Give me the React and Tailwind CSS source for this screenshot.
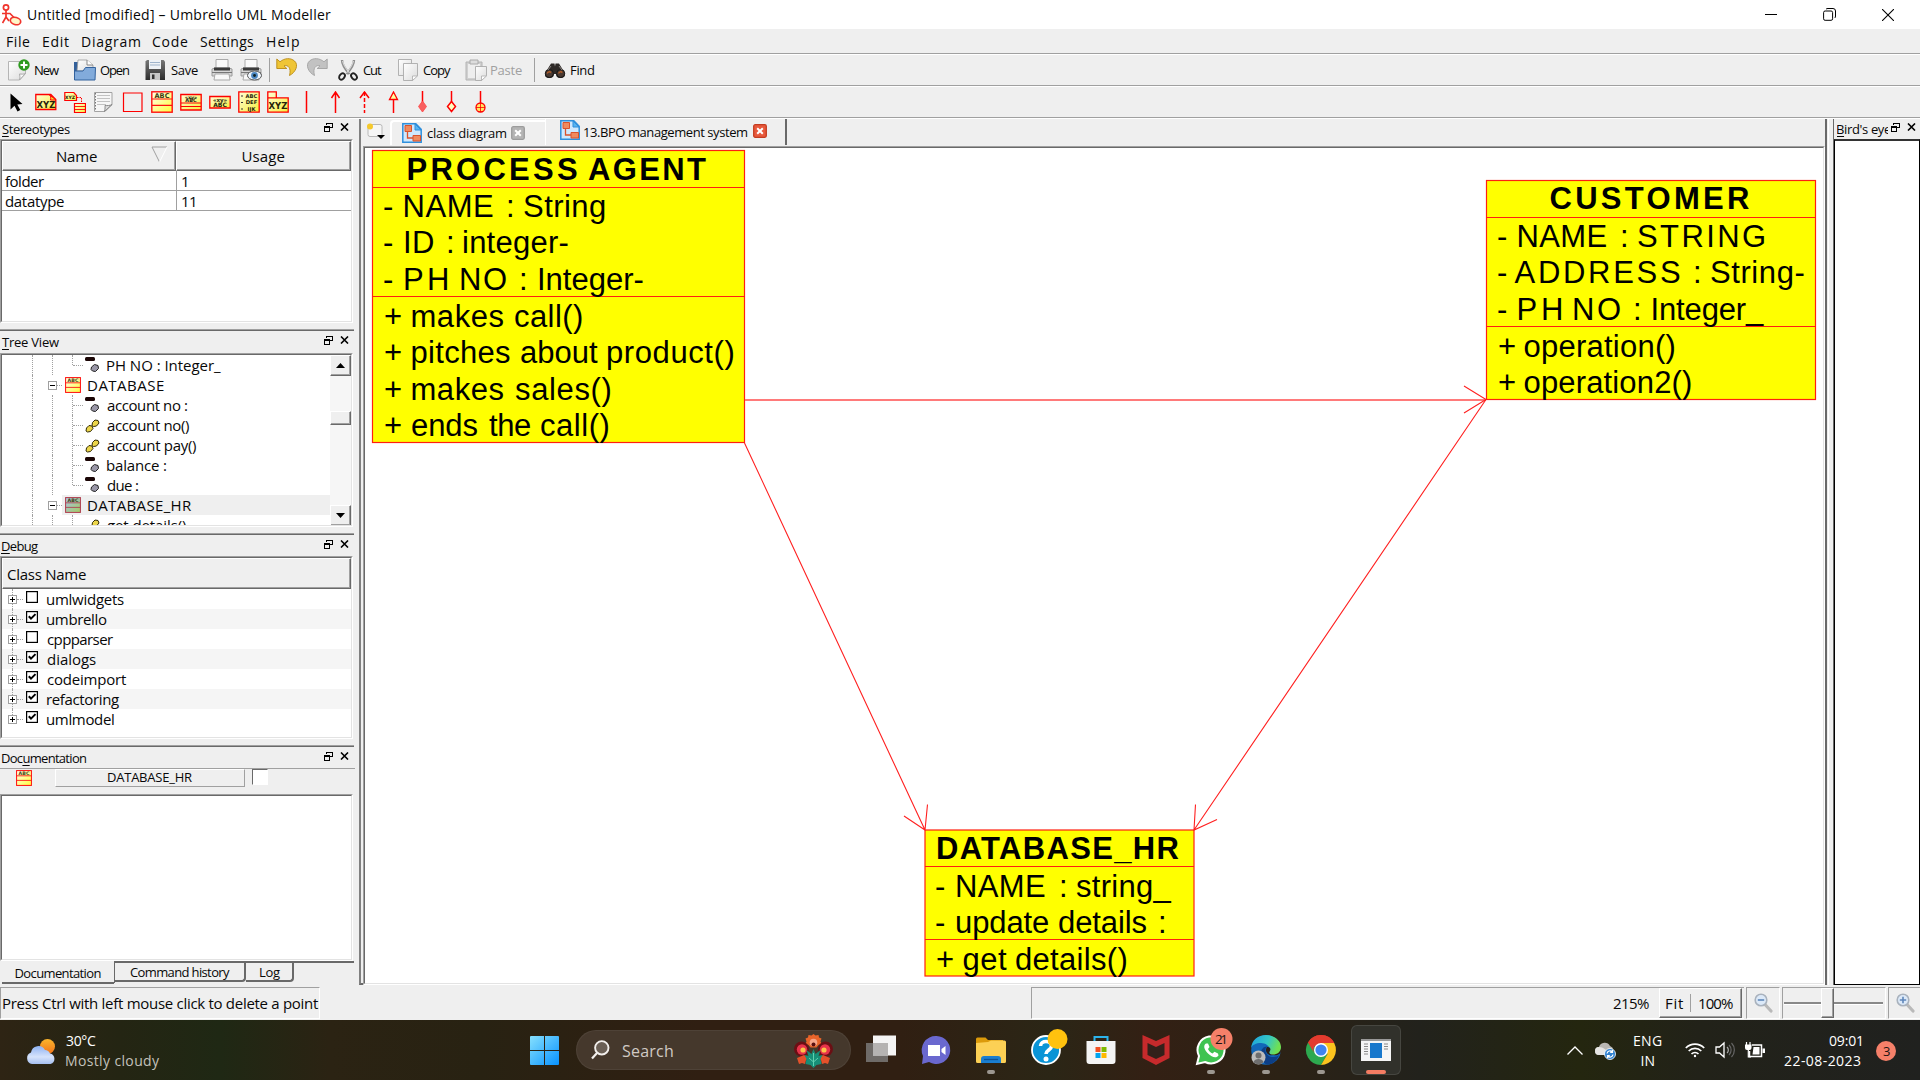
import React from "react";

const UI = '"Open Sans", "Noto Sans", sans-serif';
const ARIAL = '"Liberation Sans", Arial, sans-serif';
const SIZES = {
  10: "text-[10px]", 13: "text-[13px]", 14: "text-[14px]", 15: "text-[15px]",
  16: "text-[16px]", 17: "text-[17px]",
};

let ctx;
function measure(text, font, width) {
  ctx = ctx || document.createElement("canvas").getContext("2d");
  ctx.font = font;
  const m = ctx.measureText(text);
  const left = -m.actualBoundingBoxLeft;
  const ink = m.actualBoundingBoxRight - left;
  const spacing = width && text.length > 1 ? (width - ink) / (text.length - 1) : 0;
  return { left, spacing, ink };
}

/* A label whose drawn width is w pixels. u underlines the mnemonic at that index. */
function T({ t, w, s = 15, u = -1, className = "" }) {
  const m = measure(t, `400 ${s}px ${UI}`, w);
  return (
    <span className={`block shrink-0 whitespace-pre ${SIZES[s]} ${className}`} style={{ width: w || m.ink }}>
      <span style={{ letterSpacing: m.spacing, marginLeft: -m.left }}>
        {u < 0 ? t : <>{t.slice(0, u)}<u className="underline-offset-2">{t[u]}</u>{t.slice(u + 1)}</>}
      </span>
    </span>
  );
}

function Sunken({ className = "", children }) {
  return (
    <div className={`border border-t-[#a0a0a0] border-l-[#a0a0a0] border-r-white border-b-white ${className}`}>
      <div className="h-full overflow-hidden border border-t-[#696969] border-l-[#696969] border-r-[#e3e3e3] border-b-[#e3e3e3] bg-white">
        {children}
      </div>
    </div>
  );
}

function FloatIcon() {
  return (
    <svg className="shrink-0" width="9" height="10" viewBox="0 0 9 10" fill="none" stroke="#000" shapeRendering="crispEdges">
      <path d="M2.5 3V1.5h5.9v4H6M2 1h7" /><path d="M.5 9.5v-5h5v5zM0 5h6" />
    </svg>
  );
}
function CloseIcon() {
  return (
    <svg className="shrink-0" width="9" height="8" viewBox="0 0 9 8" stroke="#000" strokeWidth="1.6"><path d="M1 .5l7 7M8 .5l-7 7" /></svg>
  );
}

function DockTitle({ t, w, u, className = "" }) {
  return (
    <div className={`flex shrink-0 items-center pl-0.5 ${className}`}>
      <T t={t} w={w} s={13} u={u} />
      <div className="mr-1.5 mb-1 ml-auto flex items-center gap-[7px]"><FloatIcon /><CloseIcon /></div>
    </div>
  );
}
const DockEdge = () => <div className="h-0.5 w-[354px] shrink-0 border-t border-[#a0a0a0] bg-[#696969]" />;

function ClassIcon({ s = 16, dim = false }) {
  const line = dim ? "#b04050" : "#fe1010";
  return (
    <svg className="shrink-0" width={s} height={s} viewBox="0 0 22 22">
      <defs>
        <linearGradient id={dim ? "cd" : "cy"} x2="1" y2="1">
          <stop offset="0" stopColor={dim ? "#a9c4e8" : "#fffff0"} /><stop offset="1" stopColor={dim ? "#a2cc62" : "#ffff3c"} />
        </linearGradient>
      </defs>
      <rect x=".8" y=".8" width="20.400" height="20.400" fill={dim ? "url(#cd)" : "url(#cy)"} stroke={line} strokeWidth="1.400" />
      <path d="M1 8h20M1 14.300h20" stroke={line} strokeWidth="1.200" />
      <text x="11" y="7" textAnchor="middle" fontFamily="DejaVu Sans" fontWeight="700" fontSize="6.600" fill="#3c3a10">ABC</text>
    </svg>
  );
}

/* ---------- toolbar icons, 22px grid ---------- */
const I = ({ children, w = 22, h = 22, className = "" }) => (
  <svg className={`shrink-0 ${className}`} width={w} height={h} viewBox={`0 0 ${w} ${h}`} fill="none">{children}</svg>
);

const Grads = () => (
  <svg width="0" height="0" className="absolute">
    <defs>
      <linearGradient id="paper" x2="1" y2="1"><stop offset="0" stopColor="#fff" /><stop offset="1" stopColor="#dcdcdc" /></linearGradient>
      <linearGradient id="ye" x2="1" y2="1"><stop offset="0" stopColor="#ffffd8" /><stop offset="1" stopColor="#f6ee3c" /></linearGradient>
      <linearGradient id="gr" x2="0" y2="1"><stop offset="0" stopColor="#777" /><stop offset="1" stopColor="#2c2c2c" /></linearGradient>
    </defs>
  </svg>
);

const NewIcon = () => (
  <I><path d="M.5 2.500h17v12l-6 6.500H.5z" fill="url(#paper)" stroke="#b5b5b5" /><path d="M11.500 21c1-3 0-5 0-6 2 0 4 .5 6-.5z" fill="#f8f8f8" stroke="#aaa" /><circle cx="16" cy="6" r="5.700" fill="#2c9a1e" /><path d="M16 2.500v7M12.500 6h7" stroke="#fff" strokeWidth="2" /></I>
);
const OpenIcon = () => (
  <I><path d="M0 3h4v5h17v13H0z" fill="#33609a" /><path d="M4 1h9l6 5v6H3z" fill="url(#paper)" stroke="#999" strokeWidth=".8" /><path d="M13 1v5h6" fill="#fff" stroke="#888" /><path d="M.5 21V12h8.500l2.500-3.500h10L21 21z" fill="#82abdb" stroke="#33629d" /></I>
);
const SaveIcon = () => (
  <I w={20}><path d="M.5 2.500 2 1h16.500L20 2.500V21H.5z" fill="url(#gr)" /><path d="M4 1h12v9H4z" fill="#eef2f6" /><path d="M5 3.500h10M5 6h10" stroke="#9fb4cc" /><path d="M5 14h10v7H5z" fill="#c8c8c8" /><path d="M7 15.500h2.500V20H7z" fill="#333" /></I>
);
const PrintIcon = ({ eye }) => (
  <I><path d="M5 .5h12v9H5z" fill="#fafafa" stroke="#aaa" /><path d="M1 10l3-1h14l3 1v7H1z" fill="#d6d6d6" stroke="#9c9c9c" /><path d="M3 8.500h16v3H3z" fill="#3b3b3b" /><path d="M4 15h14l1 6H3z" fill="#f8f8f8" stroke="#aaa" /><path d="M1 13.500h20" stroke="#777" />
    {eye && <><ellipse cx="14.500" cy="16.500" rx="7" ry="4.500" fill="#eef4fa" stroke="#555" /><circle cx="14.500" cy="16.500" r="3.400" fill="#4c86c0" /><circle cx="14.500" cy="16.500" r="1.400" fill="#122" /></>}
  </I>
);
const UndoIcon = ({ gray }) => (
  <I className={gray ? "-scale-x-100" : ""}>
    <path d="M.8 1v9.500h10L8 7.800c4-1.300 7.500 2 5.500 9.700 6-3 9.500-10.500 5-14.500-4-3.500-10-3-14.500.8z" fill={gray ? "#c2c2c2" : "#efc536"} stroke={gray ? "#a2a2a2" : "#b98a14"} strokeWidth=".9" />
  </I>
);
const CutIcon = () => (
  <I w={20}><path d="M4 1c0 4 3 9 7.500 14M16 1c0 4-3 9-7.500 14" stroke="#8e8e8e" strokeWidth="2.400" /><path d="M4.500 2c1 4 3.500 8 7 12M15.500 2c-1 4-3.500 8-7 12" stroke="#eee" strokeWidth=".8" /><ellipse cx="4" cy="17.500" rx="2.400" ry="3.400" stroke="#222" strokeWidth="1.900" transform="rotate(40 4 17.500)" /><ellipse cx="16" cy="17.500" rx="2.400" ry="3.400" stroke="#222" strokeWidth="1.900" transform="rotate(-40 16 17.500)" /></I>
);
const Sheet = ({ x, y, w = 13, h = 16 }) => (
  <g transform={`translate(${x} ${y})`}><path d={`M.5.5h${w - 1}v${h - 6}l-5 5h-${w - 6}z`} fill="url(#paper)" stroke="#aaa" strokeWidth=".9" /><path d={`M${w - 5.500} ${h - 0.500}v-4.500h5z`} fill="#fff" stroke="#aaa" strokeWidth=".8" /></g>
);
const CopyIcon = () => <I w={20}><Sheet x={0} y={0} w={14} h={17} /><Sheet x={5} y={4} w={15} h={18} /></I>;
const PasteIcon = () => (
  <I><path d="M1 3h16v18H1z" fill="#d0d0d0" stroke="#b4b4b4" /><path d="M3 5h12v14H3z" fill="#eee" /><path d="M5 1h8v4H5z" fill="#ddd" stroke="#aaa" /><Sheet x={10} y={7} w={12} h={15} /></I>
);
const FindIcon = () => (
  <I><path d="M7 4.500h3.500l.5 3 .5-3H15l5.500 9c1.500 4-1 5.500-4 5.500-3.500 0-4.500-2-4.500-4h-2c0 2-1 4-4.500 4s-5.500-1.500-4-5.500z" fill="#2e2927" /><circle cx="5.300" cy="14.500" r="4" fill="#4a3a32" stroke="#171717" /><circle cx="16.700" cy="14.500" r="4" fill="#4a3a32" stroke="#171717" /><path d="M3.300 14.500a2 2 0 0 1 3.600-.9M14.700 14.500a2 2 0 0 1 3.600-.9" stroke="#b65f28" strokeWidth="1.300" /><path d="M7 7l-3 4M15 7l3 4" stroke="#8a8582" /></I>
);

const R = "#fe0000";
const tx = { fontFamily: "DejaVu Sans", fontWeight: 700, fill: "#26240a", textAnchor: "middle" };

function Tools() {
  return (
    <div className="flex h-[30px] shrink-0 items-center pl-px">
      <I className="ml-[5px]"><path d="M4.500 2.500v16l4-3.700 3 5.700 2.800-1.500-3-5.500 5.200-.6z" fill="#000" /></I>
      <I className="ml-[7px]"><path d="M.8 3.500h15l5 5V18.500H.8z" fill="url(#ye)" stroke={R} strokeWidth="1.300" /><path d="M14 3.500c2 1.500 2 3 1.500 5.500h5.500z" fill="#f8e030" stroke={R} /><text x="11" y="16.500" fontSize="8.500" {...tx}>XYZ</text></I>
      <I className="ml-[7px]"><path d="M.8 1.500h9l2.700 3V9.500H.8z" fill="url(#ye)" stroke={R} strokeWidth="1.200" /><text x="6" y="8.200" fontSize="4.500" {...tx}>XYZ</text><path d="M13 6.500h4.500V12" stroke={R} strokeDasharray="1.500 1" /><path d="M10.500 12.500h11V21.500h-11z" fill="url(#ye)" stroke={R} strokeWidth="1.200" /><path d="M10.500 15.500h11M10.500 18.500h11" stroke={R} strokeWidth=".9" /></I>
      <I className="ml-[7px]"><path d="M1.500 1.500h17.500v12l-7 7H1.500z" fill="#f6f6f6" stroke="#a3a3a3" /><path d="M4 4.500h13M4 7.500h13M4 10.500h13M4 13.500h9" stroke="#c2c2c2" /><path d="M2.500 2v18" stroke="#777" strokeDasharray="1.500 1.500" /><path d="M11.500 20.500c.8-3 .5-4.500.5-6 2 .2 5 .2 7-1z" fill="#ddd" stroke="#888" /></I>
      <I className="ml-[7px]"><path d="M1.500 2h18.500v18.500H1.500z" stroke={R} strokeWidth="1.200" /></I>
      <span className="ml-[7px]"><ClassIcon s={22} /></span>
      <I className="ml-[7px]"><path d="M.8 3.500h20.400v15.500H.8z" fill="url(#ye)" stroke={R} strokeWidth="1.300" /><path d="M1 12h20M1 15.500h20" stroke={R} strokeWidth="1" /><text x="11" y="7.800" fontSize="4.800" {...tx}>«xy»</text><text x="11" y="11.300" fontSize="5" {...tx}>ABC</text></I>
      <I className="ml-[7px]"><path d="M.8 5.500h20.400v11.500H.8z" fill="url(#ye)" stroke={R} strokeWidth="1.300" /><text x="11" y="10.600" fontSize="5.500" {...tx}>«xy»</text><text x="11" y="15.600" fontSize="6" {...tx}>ABC</text></I>
      <I className="ml-[7px]"><path d="M.8.8h20.400v20.400H.8z" fill="url(#ye)" stroke={R} strokeWidth="1.300" /><text x="13.500" y="6.700" fontSize="5.200" {...tx}>ABC</text><text x="13.500" y="13.200" fontSize="5.200" {...tx}>DEF</text><text x="13.500" y="19.500" fontSize="5.200" {...tx}>IJK</text><path d="M3 5h2M3 11.500h2M3 18h2" stroke="#333" /></I>
      <I className="ml-[7px]"><path d="M.8.8h8.500v6H.8zM.8 6.800h20.400v14.400H.8z" fill="url(#ye)" stroke={R} strokeWidth="1.300" /><text x="11" y="17.500" fontSize="8.500" {...tx}>XYZ</text></I>
      <I className="ml-[7px]"><path d="M10.500 0v22" stroke={R} strokeWidth="1.500" /></I>
      <I className="ml-[7px]"><path d="M10.500 1v21M6.500 7l4-6 4 6" stroke={R} strokeWidth="1.500" /></I>
      <I className="ml-[7px]"><path d="M10.500 1v21" stroke={R} strokeWidth="1.500" strokeDasharray="4 2" /><path d="M6 7 10.500 1l4.500 6" stroke={R} strokeWidth="1.500" /></I>
      <I className="ml-[7px]"><path d="M10.500 8v14" stroke={R} strokeWidth="1.500" /><path d="M6.500 8.500 10.500 1l4 7.500z" fill="#ffffa0" stroke={R} strokeWidth="1.300" /></I>
      <I className="ml-[7px]"><path d="M10.500 0v12" stroke={R} strokeWidth="1.500" /><path d="M10.500 10l4 5.500-4 5.500-4-5.500z" fill="#f86060" stroke="#f44" strokeWidth=".8" /></I>
      <I className="ml-[7px]"><path d="M10.500 0v11" stroke={R} strokeWidth="1.500" /><path d="M10.500 10.500l4 5-4 5-4-5z" fill="#ffffc0" stroke={R} strokeWidth="1.500" /></I>
      <I className="ml-[7px]"><path d="M10.500 0v12" stroke={R} strokeWidth="1.500" /><circle cx="10.500" cy="16.500" r="4.500" fill="#ffe860" stroke={R} strokeWidth="1.300" /><path d="M10.500 12v9M6 16.500h9" stroke={R} strokeWidth=".8" /></I>
    </div>
  );
}

/* ---------- docks ---------- */
const Dots = ({ className }) => <span className={`shrink-0 border-dotted border-[#a0a0a0] ${className}`} />;
const Box = ({ plus }) => (
  <svg className="shrink-0" width="9" height="9" viewBox="0 0 9 9" fill="none" shapeRendering="crispEdges">
    <rect x=".5" y=".5" width="8" height="8" fill="#fff" stroke="#a0a0a0" /><path d={plus ? "M2 4.500h5M4.500 2v5" : "M2 4.500h5"} stroke="#000" />
  </svg>
);
const AttrIcon = () => (
  <svg className="shrink-0" width="15" height="16" viewBox="0 0 15 16"><rect y="0" width="10" height="4" rx="1.500" fill="#1a0505" /><path d="M6.500 10l3-2.500 3.500 1 .5 3-3 3-3-.500-1.500-1.500z" fill="#9a97a8" stroke="#222" /></svg>
);
const OpIcon = () => (
  <svg className="shrink-0" width="15" height="16" viewBox="0 0 15 16"><path d="M7.500 5.500 10 3l3 .5 1 2.500-2.500 3-3 .500-1.500-1z" fill="#ecd64a" stroke="#332c05" /><path d="M1.500 11 4 8.500l3 .5 1 2.500-2.500 3-3 .500-1.500-1z" fill="#ecd64a" stroke="#332c05" /></svg>
);

const TREE = [
  { k: "a", t: "PH NO : Integer_", w: 114, end: true }, { k: "c", t: "DATABASE", w: 76 },
  { k: "a", t: "account no :", w: 80 }, { k: "o", t: "account no()", w: 82 }, { k: "o", t: "account pay()", w: 89 },
  { k: "a", t: "balance :", w: 59 }, { k: "a", t: "due :", w: 31, end: true },
  { k: "c", t: "DATABASE_HR", w: 104, sel: true }, { k: "o", t: "get details()", w: 79 },
];

function TreeRow({ r }) {
  const leaf = r.k !== "c";
  return (
    <div className="flex h-5 shrink-0 items-center">
      <Dots className="ml-[30px] h-5 border-l" />
      {leaf ? (
        <>
          <Dots className="ml-[19px] h-5 border-l" />
          <Dots className={`ml-[19px] border-l ${r.end ? "mb-auto h-2.5" : "h-5"}`} />
          <Dots className="w-2.5 border-t" />
          <span className="ml-[2px]">{r.k === "a" ? <AttrIcon /> : <OpIcon />}</span>
          <T t={r.t} w={r.w} className="ml-[7px]" />
        </>
      ) : (
        <>
          <span className="ml-[15px]"><Box /></span>
          <Dots className="w-[5px] border-t" />
          <div className={`flex h-5 flex-1 items-center pl-[3px] ${r.sel ? "bg-[#efefef]" : ""}`}><ClassIcon dim={r.sel} /><T t={r.t} w={r.w} className="ml-[7px]" /></div>
        </>
      )}
    </div>
  );
}

const Raised = ({ className = "", children }) => (
  <div className={`border border-t-white border-l-white border-r-[#696969] border-b-[#696969] bg-[#efefef] shadow-[inset_-1px_-1px_0_#a0a0a0] ${className}`}>{children}</div>
);

const DEBUG = [["umlwidgets", 77, 0], ["umbrello", 60, 1], ["cppparser", 66, 0], ["dialogs", 49, 1], ["codeimport", 79, 1], ["refactoring", 72, 1], ["umlmodel", 67, 1]];

function LeftDocks() {
  return (
    <div className="flex w-[355px] shrink-0 flex-col">
      <DockTitle t="Stereotypes" w={68} u={0} className="h-5" />
      <Sunken className="h-[184px] w-[353px] shrink-0">
        <div className="flex h-[30px]">
          <Raised className="flex w-[175px] items-center pl-[54px]"><T t="Name" w={40} />
            <svg className="mb-1 ml-[54px]" width="17" height="17" viewBox="0 0 17 17" fill="none"><path d="M16 1H1l7.500 15" stroke="#a0a0a0" /><path d="M8.500 16 16 1" stroke="#fff" /></svg>
          </Raised>
          <Raised className="flex w-[175px] items-center pl-[65px]"><T t="Usage" w={42} /></Raised>
        </div>
        {[["folder", 39, "1"], ["datatype", 59, "11"]].map(([a, w, b]) => (
          <div key={a} className="flex h-5 w-[350px] border-b border-r border-[#a0a0a0]">
            <div className="flex w-[175px] items-center border-r border-[#a0a0a0] pl-[3px]"><T t={a} w={w} /></div>
            <div className="flex items-center pl-[5px]"><T t={b} w={b.length > 1 ? 13 : 6} /></div>
          </div>
        ))}
      </Sunken>
      <div className="h-1.5 shrink-0" />
      <DockEdge />
      <DockTitle t="Tree View" w={57} u={0} className="h-[22px]" />
      <Sunken className="h-[174px] w-[353px] shrink-0">
        <div className="flex h-[171px]">
          <div className="flex flex-1 flex-col overflow-hidden">{TREE.map((r) => <TreeRow key={r.t} r={r} />)}</div>
          <div className="flex w-[21px] shrink-0 flex-col bg-[#f6f6f6]">
            <Raised className="flex h-[21px] items-center justify-center"><svg width="9" height="5"><path d="M0 5 4.500 0 9 5z" /></svg></Raised>
            <Raised className="mt-[35px] h-[14px]" />
            <Raised className="mt-auto flex h-[21px] items-center justify-center"><svg width="9" height="5"><path d="M0 0 4.500 5 9 0z" /></svg></Raised>
          </div>
        </div>
      </Sunken>
      <div className="h-1.5 shrink-0" />
      <DockEdge />
      <DockTitle t="Debug" w={36} u={0} className="h-[21px]" />
      <Sunken className="h-[183px] w-[353px] shrink-0">
        <Raised className="flex h-[31px] items-center pl-1"><T t="Class Name" w={79} /></Raised>
        {DEBUG.map(([t, w, on], i) => (
          <div key={t} className={`flex h-5 items-center pl-1.5 ${i % 2 ? "bg-[#f5f5f5]" : ""}`}>
            <div className="flex h-5 w-[9px] flex-col items-center"><Dots className="h-[6px] border-l" /><Box plus /><Dots className={`border-l ${i < 6 ? "h-[5px]" : "h-0"}`} /></div>
            <Dots className="w-[6px] border-t" />
            <svg className="mb-1 ml-[3px]" width="12" height="12" viewBox="0 0 12 12" fill="none"><rect x=".6" y=".6" width="10.800" height="10.800" fill="#fff" stroke="#000" strokeWidth="1.200" />{on ? <path d="M2.800 5.200 5 7.600l4.500-4.500" stroke="#000" strokeWidth="2" /> : null}</svg>
            <T t={t} w={w} className="ml-[9px]" />
          </div>
        ))}
      </Sunken>
      <div className="h-1.5 shrink-0" />
      <DockEdge />
      <DockTitle t="Documentation" w={84} u={3} className="h-[21px]" />
      <div className="flex h-[26px] shrink-0 items-start border-t border-[#a0a0a0]">
        <span className="mt-px ml-4"><ClassIcon /></span>
        <div className="ml-[23px] flex h-[18px] w-[190px] items-center justify-center border border-t-white border-l-white border-r-[#a0a0a0] border-b-[#a0a0a0]"><T t="DATABASE_HR" w={84} s={13} className="mb-0.5" /></div>
        <span className="ml-[7px] h-4 w-4 border border-t-[#696969] border-l-[#696969] border-r-white border-b-white bg-white" />
      </div>
      <Sunken className="h-[167px] w-[353px] shrink-0" />
      <div className="flex h-6 w-[354px] shrink-0">
        <div className="ml-0.5 flex h-[23px] w-28 shrink-0 justify-center border-b-2 border-b-[#696969]"><T t="Documentation" w={85} s={13} className="mt-0.5" /></div>
        <div className="flex h-[22px] flex-1 border-t-2 border-l border-[#696969]">
          <div className="flex h-[19px] w-[131px] justify-center rounded-br-sm border-r-2 border-b-2 border-[#696969]"><T t="Command history" w={100} s={13} className="-mt-px ml-px" /></div>
          <div className="flex h-[19px] w-[48px] justify-center rounded-br-sm border-r-2 border-b-2 border-[#696969]"><T t="Log" w={20} s={13} className="-mt-px ml-0.5" /></div>
        </div>
      </div>
    </div>
  );
}

/* ---------- diagram ---------- */
function W({ t, x, x2, y, b }) {
  const m = measure(t, `${b ? 700 : 400} 31px ${ARIAL}`, x2 ? x2 - x : 0);
  return (
    <text x={x - m.left} y={y} fontSize="31" fontWeight={b ? 700 : 400} fontFamily={ARIAL} style={{ letterSpacing: m.spacing }}>{t}</text>
  );
}

const NODES = [
  { x: 372.5, y: 150.5, w: 372, h: 292, d: [187.5, 296.5],
    title: [179.500, ["PROCESS", 408.500, 577], ["AGENT", 588, 706]],
    rows: [
      [216.700, ["-", 384], ["NAME", 404.500, 493], [":", 508], ["String", 524, 605]],
      [253.300, ["-", 384], ["ID", 405, 433], [":", 448], ["integer-", 464, 567.500]],
      [290, ["-", 384], ["PH", 405, 447], ["NO", 461, 506], [":", 521], ["Integer-", 539, 642.500]],
      [326.500, ["+", 385], ["makes", 412.500, 503.500], ["call()", 515, 582]],
      [363, ["+", 385], ["pitches", 412.500, 510], ["about", 521, 598], ["product()", 608, 733.500]],
      [399.700, ["+", 385], ["makes", 412.500, 503.500], ["sales()", 515, 610.500]],
      [435.700, ["+", 385], ["ends", 412, 477.500], ["the", 489, 530], ["call()", 541, 608.500]],
    ] },
  { x: 1486.500, y: 180.500, w: 329, h: 219, d: [217.500, 326.500],
    title: [209.400, ["CUSTOMER", 1550.500, 1749]],
    rows: [
      [246.500, ["-", 1498], ["NAME", 1518.500, 1606.500], [":", 1622], ["STRING", 1638, 1764]],
      [283.300, ["-", 1498], ["ADDRESS", 1514.500, 1680], [":", 1695], ["String-", 1711, 1803.500]],
      [320, ["-", 1498], ["PH", 1518.500, 1561], ["NO", 1574, 1620], [":", 1635], ["Integer_", 1652.500, 1764]],
      [356.800, ["+", 1499], ["operation()", 1524.500, 1674.500]],
      [393, ["+", 1499], ["operation2()", 1524.500, 1691]],
    ] },
  { x: 925, y: 830, w: 269, h: 146, d: [866.500, 939.500],
    title: [858.700, ["DATABASE_HR", 938, 1178.500]],
    rows: [
      [896.700, ["-", 936], ["NAME", 957, 1045], [":", 1061], ["string_", 1076, 1171.500]],
      [933, ["-", 936], ["update", 957, 1048], ["details", 1059, 1146.500], [":", 1160]],
      [969.700, ["+", 937], ["get", 963.500, 1007], ["details()", 1016, 1126.500]],
    ] },
];

function Diagram() {
  return (
    <svg width="1458" height="835" viewBox="365 148 1458 835" className="block">
      {NODES.map((n) => (
        <g key={n.x}>
          <rect x={n.x} y={n.y} width={n.w} height={n.h} fill="#ffff00" stroke="#ff2010" strokeWidth="1.200" />
          {n.d.map((d) => <path key={d} d={`M${n.x} ${d}h${n.w}`} stroke="#ff2010" strokeWidth="1.200" />)}
          {n.title.slice(1).map((w) => <W key={w[0]} b t={w[0]} x={w[1]} x2={w[2]} y={n.title[0]} />)}
          {n.rows.map((r) => r.slice(1).map((w) => <W key={w[0] + w[1] + r[0]} t={w[0]} x={w[1]} x2={w[2]} y={r[0]} />))}
        </g>
      ))}
      <path d="M745 400H1486" stroke="#ff7a7a" strokeWidth="2" />
      <g fill="none" stroke="#ff2020" strokeWidth="1.100">
        <path d="M1464 386l22 13.500-22 13.500" />
        <path d="M744.500 443 925 830M904 816l21 14 2.500-25.500" />
        <path d="M1486 399.500 1194 830M1195.500 804.500 1194 830l23-10.500" />
      </g>
    </svg>
  );
}

const DiagIcon = () => (
  <svg className="shrink-0" width="20" height="20" viewBox="0 0 20 20" fill="none"><path d="M.8.800h13l5.400 5.400v13H.8z" fill="#cfe8fd" stroke="#2f8fdc" strokeWidth="1.500" /><path d="M13 1v6h6z" fill="#58b4f0" stroke="#2f8fdc" /><path d="M3 2.500h6.500v6H3zM11 12.500h7.500v5.500H11z" fill="#f08a5e" stroke="#d9532c" /><path d="M5.500 8v7H11" stroke="#d9532c" strokeWidth="1.300" /></svg>
);
const TabClose = ({ c, b }) => (
  <svg className="shrink-0" width="14" height="14" viewBox="0 0 14 14"><rect x=".7" y=".7" width="12.600" height="12.600" rx="1.500" fill={c} stroke={b} strokeWidth="1.300" /><path d="M4.200 4.200l5.600 5.600M9.800 4.200l-5.600 5.600" stroke="#fff" strokeWidth="2" /></svg>
);

function Mag({ plus }) {
  return (
    <svg className="shrink-0" width="19" height="20" viewBox="0 0 19 20" fill="none"><path d="M11.500 12l5.500 6" stroke="#b9b9b9" strokeWidth="3.200" strokeLinecap="round" /><circle cx="7" cy="7" r="5.800" fill="#dce9f8" stroke="#a9b2bd" strokeWidth="1.600" /><path d={plus ? "M3.800 7h6.400M7 3.800v6.400" : "M3.800 7h6.400"} stroke="#5f87ba" strokeWidth="1.600" /></svg>
  );
}
const Cell = ({ className = "", children }) => (
  <div className={`flex h-8 items-center border border-t-[#a0a0a0] border-l-[#a0a0a0] border-r-white border-b-white ${className}`}>{children}</div>
);

function StatusBar() {
  return (
    <div className="flex h-[35px] shrink-0 items-start pt-0.5">
      <Cell className="w-80 shrink-0 pl-0.5"><T t="Press Ctrl with left mouse click to delete a point" w={315} /></Cell>
      <Cell className="ml-[711px] w-[713px] border-r-0! pl-[581px]">
        <T t="215%" w={36} />
        <Raised className="ml-2.5 flex h-[30px] w-[83px] items-center pl-1.5">
          <T t="Fit" w={17} /><span className="ml-[7px] h-[18px] w-px bg-[#a0a0a0]" /><T t="100%" w={34} className="ml-2" />
        </Raised>
      </Cell>
      <Cell className="ml-0.5 w-[34px] justify-center"><Mag /></Cell>
      <Cell className="ml-0.5 w-[104px]">
        <span className="ml-px h-[3px] w-[37px] border-b border-white bg-[#888]" /><Raised className="h-[30px] w-[13px]" /><span className="h-[3px] w-[49px] border-b border-white bg-[#888]" />
      </Cell>
      <Cell className="ml-0.5 w-8 border-r-0! pl-[7px]"><Mag plus /></Cell>
    </div>
  );
}

/* ---------- taskbar ---------- */
const App30 = ({ children, mark, className = "" }) => (
  <div className={`relative flex h-[60px] w-[55px] shrink-0 items-center justify-center ${className}`}>
    <svg width="30" height="30" viewBox="0 0 30 30" fill="none" className="overflow-visible">{children}</svg>
    {mark && <span className="absolute bottom-1.5 h-1 w-2 rounded-full bg-[#9c9790]" />}
  </div>
);

function Taskbar() {
  return (
    <div className="flex h-[60px] shrink-0 items-center bg-[linear-gradient(90deg,#2e2414_0px,#242513_120px,#1f2814_220px,#2b2313_330px,#282212_480px,#301f12_700px,#301f12_900px,#2b2616_1050px,#332014_1150px,#2c2215_1280px,#22221c_1420px,#24260f_1580px,#222219_1700px,#20211f_1920px)] text-white">
      <svg className="mt-1 ml-[26px] shrink-0" width="30" height="26" viewBox="0 0 30 26">
        <defs><linearGradient id="sun" x2="0" y2="1"><stop offset="0" stopColor="#fbb52c" /><stop offset="1" stopColor="#f2741a" /></linearGradient><linearGradient id="cl" x2="0" y2="1"><stop offset="0" stopColor="#8fb3f2" /><stop offset=".6" stopColor="#d6e3fb" /><stop offset="1" stopColor="#a5bff0" /></linearGradient></defs>
        <circle cx="21.500" cy="7.500" r="7.500" fill="url(#sun)" /><path d="M6 25a6 6 0 0 1-1-11.500A7.500 7.500 0 0 1 19 11a6 6 0 0 1 5 3.500A5.400 5.400 0 0 1 24.500 25z" fill="url(#cl)" />
      </svg>
      <div className="mt-0.5 ml-2.5 w-[100px]"><T t="30°C" w={30} s={14} className="leading-5" /><T t="Mostly cloudy" w={94} s={14} className="leading-5 text-[#c3c1bb]" /></div>
      <svg className="mt-px ml-[364px] shrink-0" width="29" height="29" viewBox="0 0 29 29"><defs><linearGradient id="win" gradientUnits="userSpaceOnUse" x1="0" y1="0" x2="29" y2="29"><stop offset="0" stopColor="#86e0fd" /><stop offset="1" stopColor="#0892ff" /></linearGradient></defs><path d="M0 1a1 1 0 0 1 1-1h13v14H0zM15 0h13a1 1 0 0 1 1 1v13H15zM0 15h14v14H1a1 1 0 0 1-1-1zM15 15h14v13a1 1 0 0 1-1 1H15z" fill="url(#win)" /></svg>
      <div className="ml-[17px] flex h-10 w-[275px] shrink-0 items-center rounded-full border border-white/5 bg-[#45382c]">
        <svg className="ml-3.5" width="19" height="20" viewBox="0 0 19 20" fill="none"><circle cx="10.800" cy="7.800" r="6.700" stroke="#f2efec" strokeWidth="1.900" fill="#6a5f55" /><path d="M6 13 1 18.500" stroke="#f2efec" strokeWidth="2.200" /></svg>
        <T t="Search" w={51} s={16} className="mt-0.5 ml-3 text-[#d0cac4]" />
        <svg className="mt-0.5 ml-[121px]" width="39" height="34" viewBox="0 0 39 34">
          <path d="M19.500 0l2 1.500 3-.5.500 2.500 2.500 1-1 3 1 2-3 1.500-2 2.500h-6l-2-2.500-3-1.500 1-2-1-3 2.500-1 .5-2.500 3 .5z" fill="#e8642a" /><circle cx="19.500" cy="8.500" r="3.800" fill="#f5a58a" /><circle cx="19.500" cy="10.500" r="2" fill="#5a1010" />
          <circle cx="7.500" cy="15" r="7.500" fill="#6b0f14" /><circle cx="31.500" cy="15" r="7.500" fill="#6b0f14" /><circle cx="8" cy="15.500" r="5.200" fill="#e7334a" /><circle cx="31" cy="15.500" r="5.200" fill="#e7334a" /><circle cx="9" cy="16" r="2.600" fill="#fbc24a" /><circle cx="30" cy="16" r="2.600" fill="#fbc24a" />
          <path d="M3 24l7-3 5 3-3 2-1 4-3-1-3 1zM36 24l-7-3-5 3 3 2 1 4 3-1 3 1z" fill="#e4512a" /><path d="M19.500 15l2 5 5-4-2 6 4-1-2 4 1 5-5 1-3 3-3-3-5-1 1-5-2-4 4 1-2-6 5 4z" fill="#178f78" /><path d="M19.500 19v13M15 24l4.500 4 4.500-4" stroke="#5fd0b0" fill="none" />
        </svg>
      </div>
      <App30 className="ml-[2px]"><path d="M0 8h22v19H0z" fill="#6f6b68" /><path d="M7 0.500h23v20H7z" fill="#f4f4f4" /><path d="M7 8h15v12.500H7z" fill="#b5b3b2" /></App30>
      <App30><path d="M15.500 1A14 14 0 1 1 8 27l-7 2 1-8A14 14 0 0 1 15.500 1z" fill="#6a68cf" /><path d="M7 10h12v11H7z" fill="#fff" /><path d="M20.500 14l4-3v9l-4-3z" fill="#fff" /></App30>
      <App30 mark><path d="M0 4a1.500 1.500 0 0 1 1.500-1.500h8L12 5h15v8H0z" fill="#dc9a0a" /><path d="M0 8l12-1 3-1.500h13.500A1.500 1.500 0 0 1 30 7v19.500a1.500 1.500 0 0 1-1.500 1.500h-27A1.500 1.500 0 0 1 0 26.500z" fill="#fcd055" /><path d="M5 28v-4a3 3 0 0 1 3-3h14a3 3 0 0 1 3 3v4z" fill="#1a7ed0" /><path d="M8 24.500h14" stroke="#0d5296" strokeWidth="1.300" /></App30>
      <App30><circle cx="15" cy="15" r="14" fill="#0a94d6" stroke="#fff" strokeWidth="1.800" /><path d="M9.500 11c0-6 11-6 11 0 0 4-5.500 4-5.500 8" stroke="#fff" strokeWidth="3.600" /><circle cx="15" cy="24" r="2.500" fill="#fff" /><circle cx="26.500" cy="4" r="10" fill="#ffc20e" /></App30>
      <App30><path d="M8.500 7V2h13v5" stroke="#2cb4ec" strokeWidth="2" /><path d="M.5 6h29v20a3 3 0 0 1-3 3h-23a3 3 0 0 1-3-3z" fill="#f4f4f4" /><path d="M9.500 12h5v5h-5z" fill="#f25022" /><path d="M15.500 12h5v5h-5z" fill="#7fba00" /><path d="M9.500 18h5v5h-5z" fill="#00a4ef" /><path d="M15.500 18h5v5h-5z" fill="#ffb900" /></App30>
      <App30><path d="M1.500 0 15 6 28.500 0v23L15 30 1.500 23z" fill="#c62a2c" /><path d="M6.500 8 15 12l8.500-4v12L15 24l-8.500-4z" fill="#33201a" /></App30>
      <App30 mark><path d="M1 29l2-8A13.500 13.500 0 1 1 9 27z" fill="#3fc351" stroke="#fff" strokeWidth="2" /><path d="M10 8.500c-3 2-2 6 2 10s8.500 5 10.500 2l-.5-2-3.500-1.700-2 1.700c-2-1-3.500-2.500-4.500-4.500l1.500-2L12 8.500z" fill="#fff" /><circle cx="25.500" cy="4" r="11" fill="#f58069" /><text x="25.500" y="9" textAnchor="middle" fontFamily="Open Sans" fontSize="13.500" fill="#1c1412" textLength="13">21</text></App30>
      <App30 mark>
        <defs><linearGradient id="ed" x2="1" y2=".3"><stop offset="0" stopColor="#1b9fe0" /><stop offset=".6" stopColor="#35c7c4" /><stop offset="1" stopColor="#6fe052" /></linearGradient></defs>
        <circle cx="15" cy="15" r="14.800" fill="#1267b8" /><path d="M19 11.500C24 10 31 12 30 15c0 3-1 3.500-1 3.500-3 2.500-7 2-9 1z" fill="#301f14" /><path d="M0 13C1 5 7 0 15 0c9 0 15 6 15 12 0 5-4 7.500-8 7.500-3 0-4.500-1-3.500-3C20.500 12 15 8 10 8c-5 0-9 2-10 5z" fill="url(#ed)" /><path d="M10 18c0-4 3-7 6.500-6.500C12 14 15 22 22 22c3 0 5-1 6-2-2 6-7 10-12 9.500-4-1-6-6-6-11.500z" fill="#0d3f86" /><path d="M16 12c3-.5 4.500 2 2.700 4.300-1.500 2.200 1 3.700 3.300 3.700-5 1.500-9-4-6-8z" fill="#2a1f17" /><circle cx="7.500" cy="22.500" r="7" fill="#bdbdbd" /><circle cx="7.500" cy="20.500" r="3" fill="#6e6e6e" /><path d="M2.500 27c1-4 9-4 10 0-2 3-8 3-10 0z" fill="#6e6e6e" />
      </App30>
      <App30 mark><path d="M15 15 2 7.500A15 15 0 0 1 28 7.500z" fill="#e33b2e" /><path d="M15 15 2 7.500A15 15 0 0 0 15 30l6.500-11z" fill="#2da94f" /><path d="M15 8h13.200A15 15 0 0 1 15 30l6.500-11z" fill="#fcc31e" /><path d="M2 7.500 8.700 19A7 7 0 0 1 15 8h13.300A15 15 0 0 0 2 7.500z" fill="#e33b2e" /><circle cx="15" cy="15" r="7" fill="#fff" /><circle cx="15" cy="15" r="5.600" fill="#3f84f0" /></App30>
      <div className="relative ml-[3px] flex h-[50px] w-[50px] shrink-0 items-center justify-center rounded-md border border-white/10 bg-[#31312b]">
        <svg width="30" height="22" viewBox="0 0 30 22"><path d="M0 0h30v22H0z" fill="#f5f5f5" /><path d="M0 0h30v2H0z" fill="#999" /><path d="M9 4h12v15H9z" fill="#1878cc" /><path d="M3 5h4M3 7.500h4M3 10h4M3 12.500h4M3 15h4M23 5h4M23 7.500h4M23 10h4" stroke="#888" /></svg>
        <span className="absolute bottom-0 h-1 w-5 rounded-full bg-[#f47c62]" />
      </div>
      <svg className="ml-[166px] shrink-0" width="16" height="9" viewBox="0 0 16 9" fill="none"><path d="M.5 8.500 8 1l7.500 7.500" stroke="#fff" strokeWidth="1.300" /></svg>
      <svg className="mt-0.5 ml-3 shrink-0" width="21" height="18" viewBox="0 0 21 18" fill="none"><path d="M4 13a4 4 0 0 1 0-8 6 6 0 0 1 11-1 5 5 0 0 1 1 9z" fill="#b9b7b3" /><path d="M4 13a4 4 0 0 1 0-8c4 0 8 3 12 8z" fill="#e6e5e3" /><circle cx="15" cy="12" r="5.500" fill="#2f80cf" stroke="#fff" strokeWidth=".8" /><path d="M12 11.500a3 3 0 0 1 5.300-1.500M18 12.500a3 3 0 0 1-5.300 1.500M17.500 8v2.300h-2.300M12.500 16v-2.300h2.300" stroke="#fff" strokeWidth="1.200" /></svg>
      <div className="mt-0.5 ml-[18px] flex w-7 shrink-0 flex-col items-center"><T t="ENG" w={28} s={14} className="leading-5" /><T t="IN" w={13} s={14} className="leading-5" /></div>
      <svg className="ml-[23px] shrink-0" width="20" height="16" viewBox="0 0 20 16" fill="none" stroke="#fff" strokeWidth="1.700"><path d="M.8 6a13 13 0 0 1 18.400 0M3.700 9a9 9 0 0 1 12.600 0M6.500 12a5 5 0 0 1 7 0" /><circle cx="10" cy="14" r="1.200" fill="#fff" stroke="none" /></svg>
      <svg className="ml-2.5 shrink-0" width="20" height="18" viewBox="0 0 20 18" fill="none"><path d="M1 6h3.500L9 2v14l-4.500-4H1z" stroke="#fff" strokeWidth="1.300" /><path d="M12 6a4 4 0 0 1 0 6" stroke="#aaa" strokeWidth="1.200" /><path d="M14 4a7 7 0 0 1 0 10M16.500 2a10 10 0 0 1 0 14" stroke="#666" strokeWidth="1.200" /></svg>
      <svg className="ml-2.5 shrink-0" width="20" height="16" viewBox="0 0 20 16" fill="none"><path d="M7 3h9.500v11.500H4.500V9" stroke="#fff" strokeWidth="1.500" /><path d="M8.500 5h6v7.500h-7zM17.500 6.500H20v4.500h-2.500zM0 2.500h6.500V6a2 2 0 0 1-2 2h-2.500a2 2 0 0 1-2-2z" fill="#fff" /><path d="M1.500 0v3M5 0v3M3.300 8v7H6" stroke="#fff" strokeWidth="1.200" /></svg>
      <div className="mt-px ml-[19px] flex w-[77px] shrink-0 flex-col items-end"><T t="09:01" w={32} s={14} className="leading-5" /><T t="22-08-2023" w={77} s={14} className="leading-5" /></div>
      <div className="mt-0.5 ml-[15px] flex h-5 w-5 shrink-0 items-center justify-center rounded-full bg-[#f58069] text-[#1c1412]"><T t="3" s={13} w={6} /></div>
    </div>
  );
}

const MENU = [["File", 23, "ml-[7px]"], ["Edit", 26, "ml-[13px]"], ["Diagram", 58, "ml-[13px]"], ["Code", 36, "ml-[12px]"], ["Settings", 54, "ml-[12px]"], ["Help", 32, "ml-[13px]"]];
const Groove = () => <div className="h-0.5 shrink-0 border-t border-[#a0a0a0] bg-white" />;

export default function App() {
  return (
    <div className="flex h-[1080px] w-[1920px] flex-col overflow-hidden bg-[#efefef] font-['Open_Sans','Noto_Sans',sans-serif] leading-5 text-[#080808]">
      <Grads />
      <div className="flex h-[29px] shrink-0 items-center bg-white">
        <svg className="ml-0.5 shrink-0" width="20" height="22" viewBox="0 0 20 22" fill="none" stroke="#f0342c" strokeWidth="1.700"><circle cx="4" cy="3.500" r="2.600" /><path d="M4 6v7M0 9.500h8l4 4M4 13l-3.500 6M4 13l3 4" /><ellipse cx="13.500" cy="17" rx="5.300" ry="3.600" fill="#fff6c8" transform="rotate(15 13.500 17)" /></svg>
        <T t="Untitled [modified] – Umbrello UML Modeller" w={303} s={14} className="ml-1.5" />
        <svg className="ml-auto" width="12" height="12"><path d="M0 5.500h12" stroke="#000" /></svg>
        <svg className="ml-[46px]" width="13" height="13" viewBox="0 0 13 13" fill="none" stroke="#000"><rect x=".6" y="3" width="9" height="9.300" rx="1.500" /><path d="M3 1.200C3.500.6 4 .5 5 .5h5A2.500 2.500 0 0 1 12.500 3v5c0 1-.2 1.600-.8 2" /></svg>
        <svg className="mr-[26px] ml-[46px]" width="12" height="12"><path d="M0 0l12 12M12 0 0 12" stroke="#000" strokeWidth="1.100" /></svg>
      </div>
      <div className="flex h-6 shrink-0 items-center pt-0.5">{MENU.map(([t, w, c]) => <T key={t} t={t} w={w} s={14} className={c} />)}</div>
      <Groove />
      <div className="flex h-[30px] shrink-0 items-center pl-2">
        <NewIcon /><T t="New" w={24} s={13} className="ml-[5px]" />
        <span className="ml-[15px]"><OpenIcon /></span><T t="Open" w={29} s={13} className="ml-1" />
        <span className="ml-4"><SaveIcon /></span><T t="Save" w={27} s={13} className="ml-1.5" />
        <span className="ml-[13px]"><PrintIcon /></span><span className="ml-[7px]"><PrintIcon eye /></span>
        <span className="ml-[7px] h-6 w-px bg-[#a0a0a0]" />
        <span className="mb-0.5 ml-1.5"><UndoIcon /></span><span className="mb-0.5 ml-2"><UndoIcon gray /></span>
        <span className="ml-[10px]"><CutIcon /></span><T t="Cut" w={19} s={13} className="ml-[5px]" />
        <span className="ml-4"><CopyIcon /></span><T t="Copy" w={28} s={13} className="ml-[5px]" />
        <span className="ml-[14px]"><PasteIcon /></span><T t="Paste" w={31} s={13} className="ml-1 text-[#a0a0a0]" />
        <span className="ml-3 h-6 w-px bg-[#a0a0a0]" />
        <span className="ml-[9px]"><FindIcon /></span><T t="Find" w={23} s={13} className="ml-[5px]" />
      </div>
      <Groove />
      <Tools />
      <Groove />
      <div className="flex h-[866px] shrink-0">
        <LeftDocks />
        <div className="ml-1 flex w-[1468px] shrink-0 flex-col border-r-2 border-b-2 border-l-2 border-[#696969] border-l-[#808080] pl-0.5">
          <div className="flex h-[27px] shrink-0 items-start">
            <svg className="mt-1 ml-1 shrink-0" width="18" height="17" viewBox="0 0 18 17"><rect x="1" y="1.500" width="14" height="12" rx="2" fill="#f6f6f6" stroke="#b8b8b8" /><circle cx="3" cy="3.500" r="3" fill="#f5c92c" /><path d="M10 12h8l-4 4z" /></svg>
            <div className="mt-px ml-[5px] flex h-[25px] w-[155px] shrink-0 items-center rounded-tl-sm border-t-2 border-l-2 border-white pl-2.5">
              <span className="mb-0.5"><DiagIcon /></span><T t="class diagram" w={79} s={13} className="mb-0.5 ml-[5px]" /><span className="mb-px ml-[5px]"><TabClose c="#b4b4b4" b="#9c9c9c" /></span>
            </div>
            <div className="flex h-[26px] w-[242px] shrink-0 items-center border-l border-r-2 border-l-white border-r-[#696969] pl-3.5">
              <span className="mb-1"><DiagIcon /></span><T t="13.BPO management system" w={163} s={13} className="ml-1" /><span className="mb-0.5 ml-[6px]"><TabClose c="#e8593c" b="#c43c20" /></span>
            </div>
          </div>
          <Sunken className="flex-1"><Diagram /></Sunken>
        </div>
        <div className="ml-[1px] w-[5px] shrink-0 border-l border-white" />
        <div className="flex flex-1 flex-col border-l border-[#696969]">
          <div className="flex h-[20px] shrink-0 items-center pl-[3px]">
            <div className="w-[51px] overflow-hidden"><T t="Bird's eye" w={54} s={13} u={0} /></div>
            <div className="mb-1 ml-[3px] flex items-center gap-[7px]"><FloatIcon /><CloseIcon /></div>
          </div>
          <div className="flex-1 border border-t-2 border-black border-t-[#333] bg-white" />
        </div>
      </div>
      <StatusBar />
      <Taskbar />
    </div>
  );
}
